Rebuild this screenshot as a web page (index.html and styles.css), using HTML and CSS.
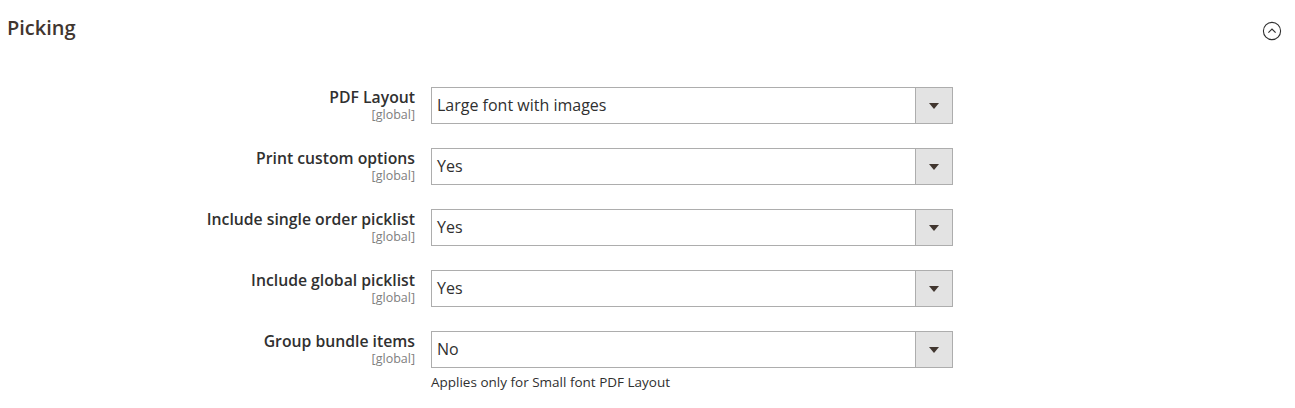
FILE: index.html
```html
<!DOCTYPE html>
<html lang="en">
<head>
<meta charset="UTF-8" />
<title>Picking</title>
<link rel="stylesheet" href="styles.css">
</head>
<body>
<div class="section">
  <div class="section-head">
    <h2 class="section-title">Picking</h2>
    <span class="collapse-btn" aria-label="Collapse">
      <svg width="20" height="20" viewBox="0 0 20 20">
        <circle cx="10" cy="10" r="8.6" fill="none" stroke="#303030" stroke-width="1.1"/>
        <path d="M6.4 11.6 L10 8 L13.6 11.6" fill="none" stroke="#303030" stroke-width="1.2"/>
      </svg>
    </span>
  </div>

  <div class="fields">
    <div class="field">
      <div class="label"><span class="name">PDF Layout</span><span class="scope">[global]</span></div>
      <div class="control">
        <div class="select"><span class="value">Large font with images</span><span class="arrow"></span></div>
      </div>
    </div>
    <div class="field">
      <div class="label"><span class="name">Print custom options</span><span class="scope">[global]</span></div>
      <div class="control">
        <div class="select"><span class="value">Yes</span><span class="arrow"></span></div>
      </div>
    </div>
    <div class="field">
      <div class="label"><span class="name">Include single order picklist</span><span class="scope">[global]</span></div>
      <div class="control">
        <div class="select"><span class="value">Yes</span><span class="arrow"></span></div>
      </div>
    </div>
    <div class="field">
      <div class="label"><span class="name">Include global picklist</span><span class="scope">[global]</span></div>
      <div class="control">
        <div class="select"><span class="value">Yes</span><span class="arrow"></span></div>
      </div>
    </div>
    <div class="field">
      <div class="label"><span class="name">Group bundle items</span><span class="scope">[global]</span></div>
      <div class="control">
        <div class="select"><span class="value">No</span><span class="arrow"></span></div>
        <p class="note">Applies only for Small font PDF Layout</p>
      </div>
    </div>
  </div>
</div>
</body>
</html>
```

FILE: styles.css
```css
* {
  box-sizing: border-box;
}
body {
  margin: 0;
  background: #fff;
  font-family: "Open Sans", "Liberation Sans", sans-serif;
  color: #303030;
}
.section-head {
  display: flex;
  justify-content: space-between;
  align-items: center;
  height: 58px;
  padding: 0 13px 0 7px;
}
.section-title {
  margin: 0 0 4px;
  font-size: 20px;
  font-weight: 600;
  color: #41362f;
}
.collapse-btn {
  display: flex;
  margin-top: 4px;
}
.fields {
  display: flex;
  flex-direction: column;
  gap: 24px;
  padding-top: 29px;
}
.field {
  display: grid;
  grid-template-columns: 415px 522px;
  column-gap: 16px;
}
.label {
  display: flex;
  flex-direction: column;
  align-items: flex-end;
}
.name {
  font-size: 15.75px;
  font-weight: 600;
  line-height: 20px;
}
.scope {
  font-size: 12.5px;
  line-height: 15px;
  color: #808080;
}
.select {
  display: flex;
  height: 37px;
  border: 1px solid #adadad;
  background: #fff;
}
.value {
  flex: 1;
  padding: 0 5px;
  font-size: 16px;
  line-height: 34px;
  color: #303030;
}
.arrow {
  width: 38px;
  margin: -1px -1px -1px 0;
  border: 1px solid #adadad;
  background: #e3e3e3;
  display: flex;
  align-items: center;
  justify-content: center;
}
.arrow::after {
  content: "";
  border-left: 5px solid transparent;
  border-right: 5px solid transparent;
  border-top: 6px solid #41362f;
}
.note {
  margin: 5px 0 0;
  font-size: 13.5px;
  line-height: 19px;
  color: #303030;
}
```
